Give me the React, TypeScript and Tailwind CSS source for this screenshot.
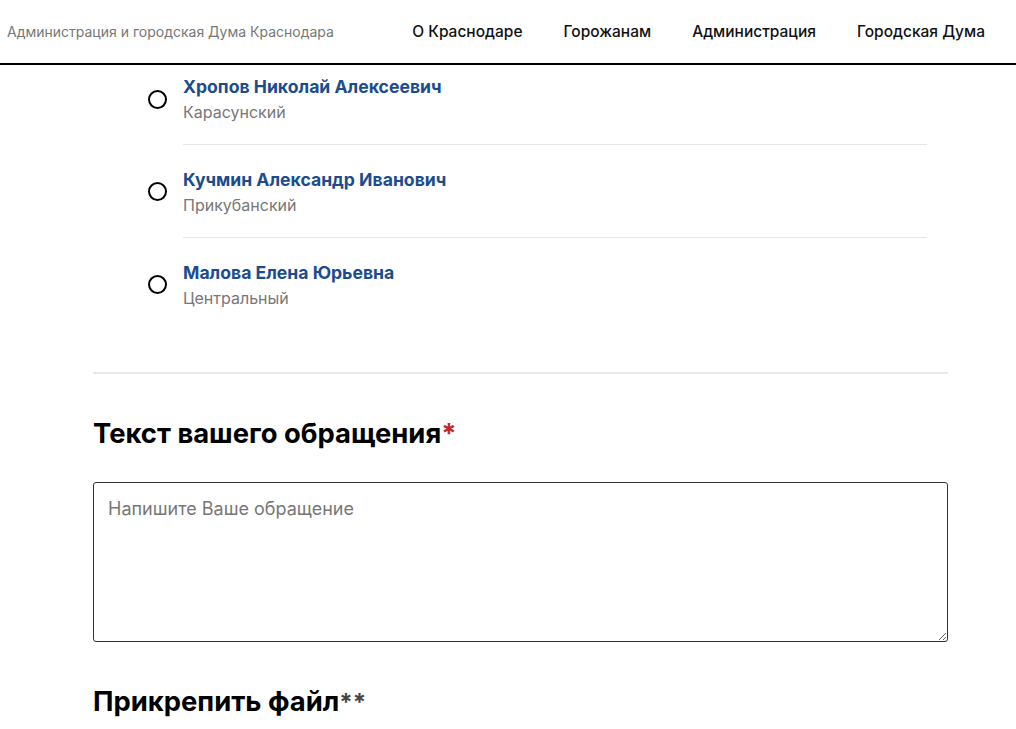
import React from 'react';

const deputies = [
  { name: 'Хропов Николай Алексеевич', district: 'Карасунский' },
  { name: 'Кучмин Александр Иванович', district: 'Прикубанский' },
  { name: 'Малова Елена Юрьевна', district: 'Центральный' },
];

const nav = ['О Краснодаре', 'Горожанам', 'Администрация', 'Городская Дума'];

export default function App() {
  return (
    <div className="min-h-screen bg-white font-['Inter',sans-serif] text-[#111]">
      {/* Header */}
      <header className="h-[65px] flex items-center justify-between pl-[7px] pr-[31px] border-b-2 border-black">
        <span className="text-[14px] text-[#777]">Администрация и городская Дума Краснодара</span>
        <nav className="flex items-center gap-[41px]">
          {nav.map((item) => (
            <a key={item} className="text-[15.5px] font-medium text-[#111]">
              {item}
            </a>
          ))}
        </nav>
      </header>

      <main className="mx-[93px] w-[855px]">
        {/* Deputies list */}
        <ul className="pl-[55px] pr-[21px] pt-[10px]">
          {deputies.map((d, i) => {
            const first = i === 0;
            const last = i === deputies.length - 1;
            return (
              <li key={d.name} className="flex items-start">
                <span className={first ? 'w-[35px] shrink-0 pt-[15px]' : 'w-[35px] shrink-0 pt-[37px]'}>
                  <span className="block w-[19px] h-[19px] rounded-full border-2 border-black" />
                </span>
                <div
                  className={
                    last
                      ? 'flex-1 pt-[23px] pb-5'
                      : first
                        ? 'flex-1 pt-0 pb-5 border-b border-[#e6e6e6]'
                        : 'flex-1 pt-[23px] pb-5 border-b border-[#e6e6e6]'
                  }
                >
                  <div className="text-[17.6px] leading-6 font-bold text-[#1b4d8e]">{d.name}</div>
                  <div className="text-[16px] leading-6 text-[#777] mt-px">{d.district}</div>
                </div>
              </li>
            );
          })}
        </ul>

        <div className="mt-[42px] border-t-2 border-[#e8e8e8]" />

        {/* Appeal text */}
        <h2 className="mt-[43px] text-[27.4px] leading-8 font-bold text-black">
          Текст вашего обращения<span className="text-[#c4262e]">*</span>
        </h2>
        <textarea
          autoFocus
          placeholder="Напишите Ваше обращение"
          className="mt-[33px] block w-full h-[160px] rounded-[3px] border border-[#333] px-[14px] py-[14px] text-[18px] leading-6 text-[#111] placeholder:text-[#777] outline-none"
        />

        <h2 className="mt-[43px] text-[27.4px] leading-8 font-bold text-black">
          Прикрепить файл<span className="text-[24px] text-[#444]">**</span>
        </h2>
      </main>
    </div>
  );
}
